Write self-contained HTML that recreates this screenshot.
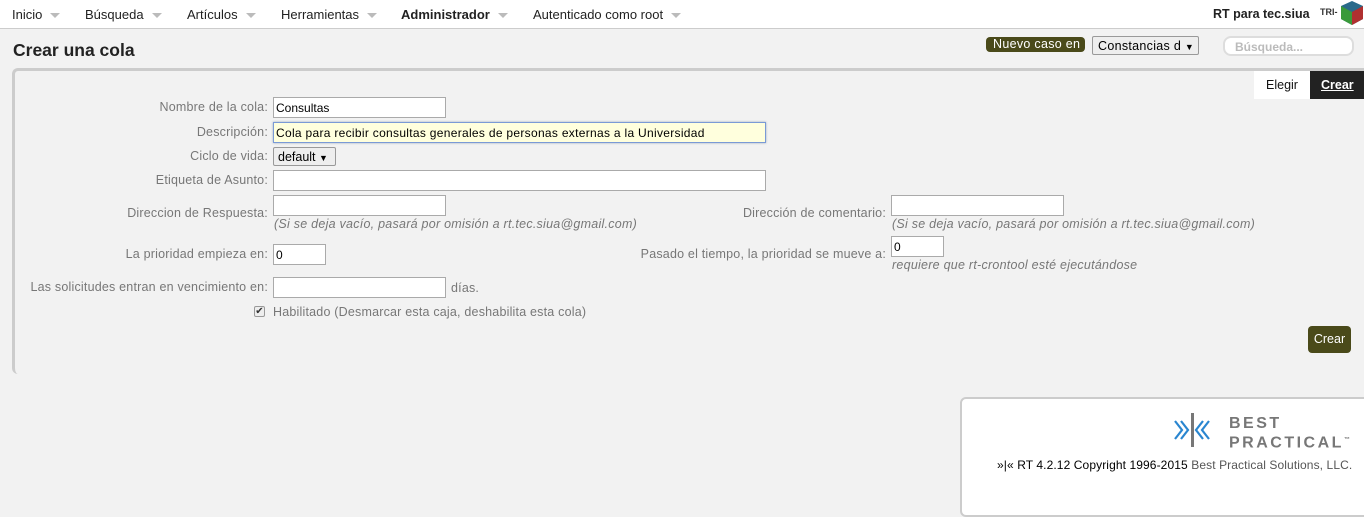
<!DOCTYPE html>
<html><head><meta charset="utf-8"><style>
*{box-sizing:border-box}
body{margin:0;width:1364px;height:482px;background:#f2f2f2;font-family:"Liberation Sans",sans-serif;font-size:12px;color:#333;position:relative;overflow:hidden}
.a{position:absolute;white-space:nowrap}
.top{position:absolute;left:0;top:0;width:1364px;height:29px;background:#fff;border-bottom:1px solid #ccc}
.nav{top:7px;font-size:13px;color:#222}
.tri{display:inline-block;width:0;height:0;border-left:5px solid transparent;border-right:5px solid transparent;border-top:5px solid #bbb;margin-left:8px;vertical-align:middle}
.lbl{color:#777;text-align:right;font-size:12.5px;letter-spacing:0.2px}
.in{position:absolute;background:#fff;border:1px solid #aaa;height:21px;font-size:12px;padding:3px 2px;color:#000}
.note{color:#777;font-style:italic;font-size:12.5px;letter-spacing:0.25px}
</style></head><body>
<div class="top"></div>
<div class="a nav" style="left:12px">Inicio<span class="tri"></span></div>
<div class="a nav" style="left:85px">Búsqueda<span class="tri"></span></div>
<div class="a nav" style="left:187px">Artículos<span class="tri"></span></div>
<div class="a nav" style="left:281px">Herramientas<span class="tri"></span></div>
<div class="a nav" style="left:401px;font-weight:bold">Administrador<span class="tri"></span></div>
<div class="a nav" style="left:533px">Autenticado como root<span class="tri"></span></div>
<div class="a" style="left:1213px;top:7px;font-weight:bold;font-size:12.5px;color:#222">RT para tec.siua</div>
<div class="a" style="left:1320px;top:7px;font-size:9px;font-weight:bold">TRI-</div>
<svg class="a" style="left:1340px;top:0" width="24" height="26"><polygon points="12,1 23,6 23,19 12,25 1,19 1,6" fill="#2a6a8a"/><polygon points="1,6 12,12 12,25 1,19" fill="#3a9a3a"/><polygon points="12,12 23,6 23,19 12,25" fill="#b03030"/></svg>
<div class="a" style="left:13px;top:40px;font-size:17.5px;font-weight:bold;color:#222">Crear una cola</div>
<div class="a" style="left:986px;top:37px;width:99px;height:15px;background:#4a4a1a;color:#fff;border-radius:4px;font-size:12.5px;padding:0 7px;line-height:15px;letter-spacing:0.3px">Nuevo caso en</div>
<div class="a" style="left:1092px;top:36px;width:107px;height:19px;background:#eee;border:1px solid #999;border-radius:2px;font-size:12.5px;padding:2px 5px;color:#000;letter-spacing:0.3px">Constancias d <span style="font-size:9px">▼</span></div>
<div class="a" style="left:1223px;top:36px;width:131px;height:20px;background:#fff;border:2px solid #ddd;border-radius:8px;font-size:12px;font-weight:bold;color:#bbb;padding:2px 10px">Búsqueda...</div>
<div class="a" style="left:12px;top:68px;width:1352px;height:306px;border-top:3px solid #ccc;border-left:3px solid #ccc;border-radius:6px 0 0 6px"></div>
<div class="a" style="left:1254px;top:71px;width:56px;height:28px;background:#fff;font-size:12.5px;color:#111;padding:7px 12px">Elegir</div>
<div class="a" style="left:1310px;top:71px;width:54px;height:28px;background:#222;font-size:12.5px;color:#fff;font-weight:bold;text-decoration:underline;padding:7px 11px">Crear</div>

<div class="a lbl" style="right:1096px;top:100px">Nombre de la cola:</div>
<div class="in" style="left:273px;top:97px;width:173px">Consultas</div>
<div class="a lbl" style="right:1096px;top:125px">Descripción:</div>
<div class="in" style="left:273px;top:122px;width:493px;background:#ffffdd;border:1px solid #7a9ad6;box-shadow:0 0 2px #9ab;letter-spacing:0.3px">Cola para recibir consultas generales de personas externas a la Universidad</div>
<div class="a lbl" style="right:1096px;top:149px">Ciclo de vida:</div>
<div class="a" style="left:273px;top:147px;width:63px;height:19px;background:#eee;border:1px solid #999;border-radius:2px;font-size:12.5px;padding:2px 4px;color:#000">default <span style="font-size:9px">▼</span></div>
<div class="a lbl" style="right:1096px;top:173px">Etiqueta de Asunto:</div>
<div class="in" style="left:273px;top:170px;width:493px"></div>
<div class="a lbl" style="right:1096px;top:206px">Direccion de Respuesta:</div>
<div class="in" style="left:273px;top:195px;width:173px"></div>
<div class="a note" style="left:274px;top:217px">(Si se deja vacío, pasará por omisión a rt.tec.siua@gmail.com)</div>
<div class="a lbl" style="right:478px;top:206px">Dirección de comentario:</div>
<div class="in" style="left:891px;top:195px;width:173px"></div>
<div class="a note" style="left:892px;top:217px">(Si se deja vacío, pasará por omisión a rt.tec.siua@gmail.com)</div>
<div class="a lbl" style="right:1096px;top:247px">La prioridad empieza en:</div>
<div class="in" style="left:273px;top:244px;width:53px">0</div>
<div class="a lbl" style="right:478px;top:247px">Pasado el tiempo, la prioridad se mueve a:</div>
<div class="in" style="left:891px;top:236px;width:53px">0</div>
<div class="a note" style="left:892px;top:258px">requiere que rt-crontool esté ejecutándose</div>
<div class="a lbl" style="right:1096px;top:280px">Las solicitudes entran en vencimiento en:</div>
<div class="in" style="left:273px;top:277px;width:173px"></div>
<div class="a lbl" style="left:451px;top:281px">días.</div>
<div class="a" style="left:254px;top:306px;width:11px;height:11px;border:1px solid #999;border-radius:2px;background:#eee;font-size:10px;line-height:9px;text-align:center">✔</div>
<div class="a lbl" style="left:273px;top:305px">Habilitado (Desmarcar esta caja, deshabilita esta cola)</div>
<div class="a" style="left:1308px;top:326px;width:43px;height:27px;background:#4a4a1a;color:#fff;border-radius:4px;font-size:12.5px;text-align:center;line-height:27px">Crear</div>

<div class="a" style="left:960px;top:397px;width:420px;height:120px;background:#fff;border:2px solid #ccc;border-radius:6px"></div>
<svg class="a" style="left:1172px;top:412px" width="50" height="36"><g fill="none" stroke="#2a86d0" stroke-width="2.2"><polyline points="3,9 10,18 3,27"/><polyline points="9,9 16,18 9,27"/><polyline points="31,9 24,18 31,27"/><polyline points="37,9 30,18 37,27"/></g><rect x="19" y="1" width="3" height="34" fill="#777"/></svg>
<div class="a" style="left:1229px;top:415px;font-size:16px;color:#777;letter-spacing:2.5px;line-height:17px;font-weight:bold">BEST<br>PRACTICAL<sup style="font-size:6px">™</sup></div>
<div class="a" style="left:997px;top:458px;font-size:12px;color:#000;letter-spacing:0.1px">»|« RT 4.2.12 Copyright 1996-2015 <span style="color:#555">Best Practical Solutions, LLC.</span></div>
</body></html>
